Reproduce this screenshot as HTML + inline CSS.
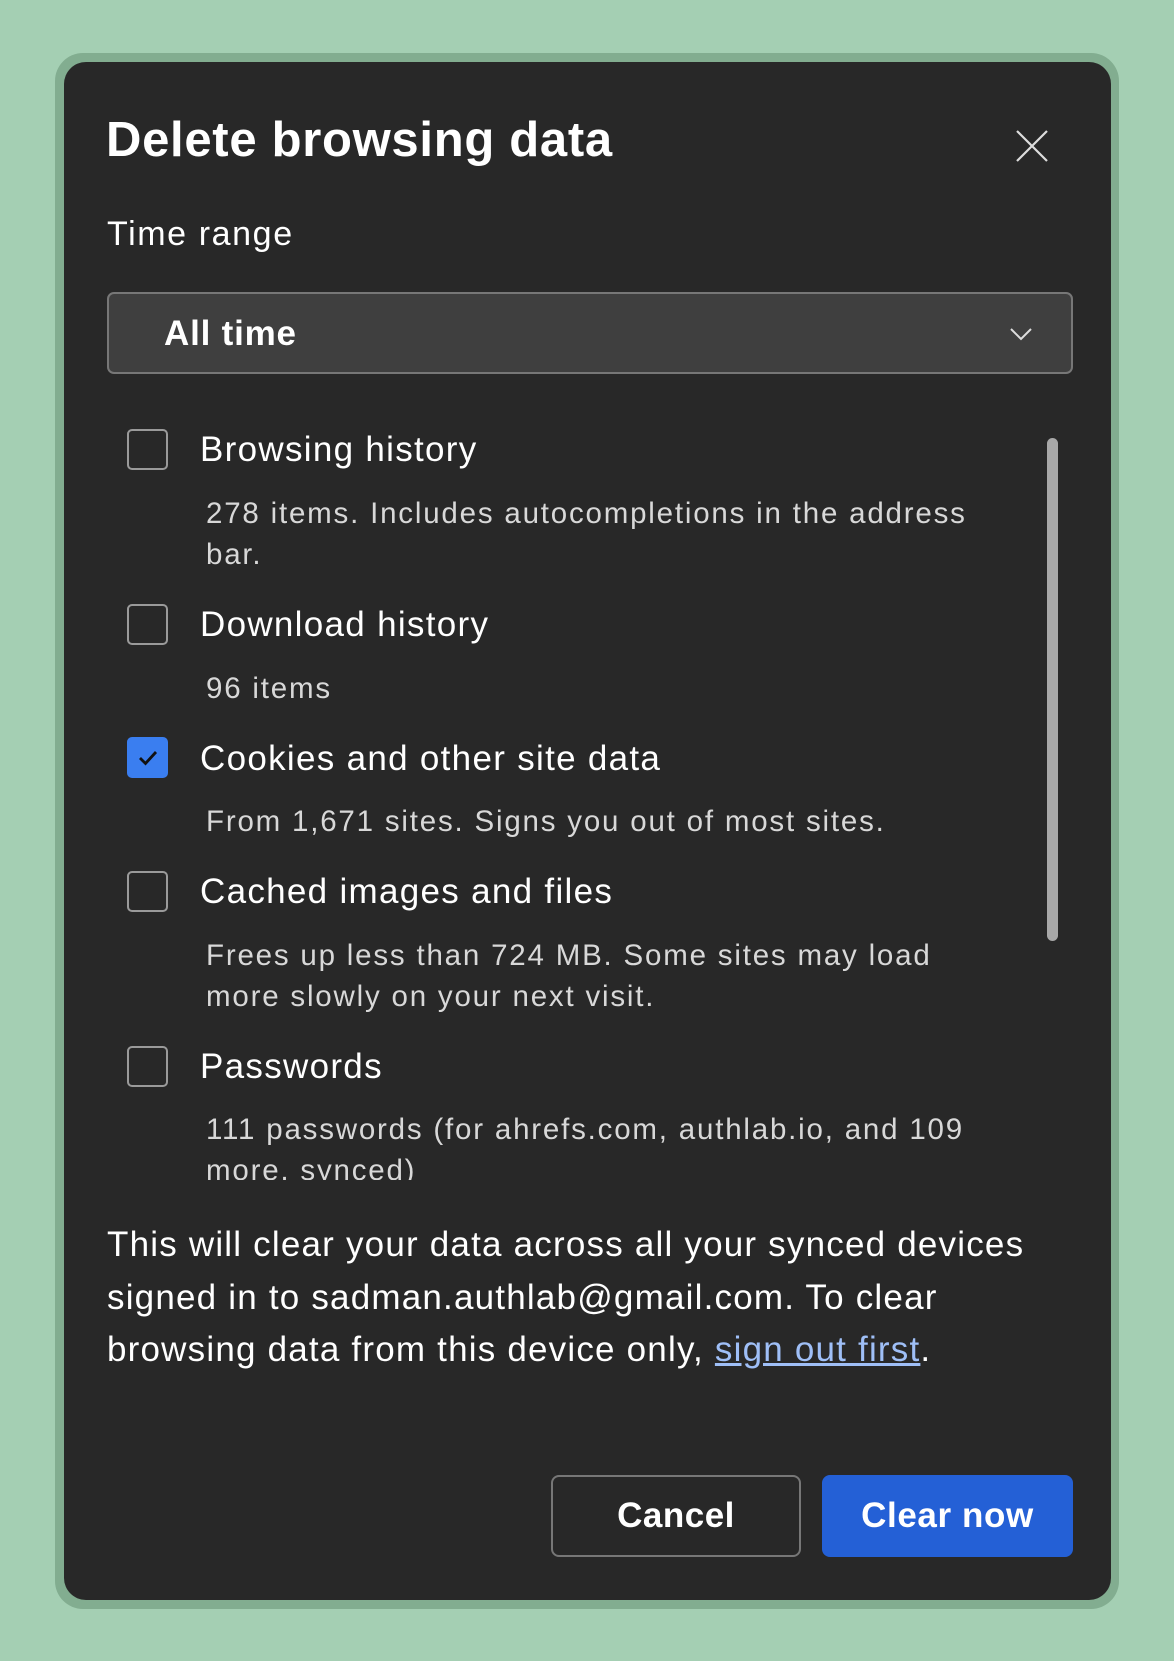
<!DOCTYPE html>
<html><head><meta charset="utf-8"><style>
*{margin:0;padding:0;box-sizing:border-box}
body{width:1174px;height:1661px;background:#a4cfb3;font-family:"Liberation Sans",Arial,sans-serif;position:relative;overflow:hidden;color:#fff}
.outer{position:absolute;left:55px;top:53px;width:1064px;height:1556px;border-radius:28px;background:#82ad90}
.dlg{position:absolute;left:64px;top:62px;width:1047px;height:1538px;border-radius:22px;background:#282828}
.a{position:absolute;white-space:nowrap}
.cb{position:absolute;left:127px;width:41px;height:41px;border:2px solid #9a9a9a;border-radius:5px}
.lbl{position:absolute;left:200px;font-size:35px;line-height:40px;letter-spacing:1.3px;white-space:nowrap}
.desc{position:absolute;left:206px;font-size:29.5px;line-height:41px;color:#d8d8d8;white-space:nowrap;letter-spacing:1.8px}
.btn{position:absolute;top:1475px;height:82px;border-radius:8px;font-weight:bold;font-size:35px;display:flex;align-items:center;justify-content:center}
</style></head><body>
<div class="outer"></div>
<div class="dlg"></div>
<div class="a" style="left:106px;top:112px;font-size:49px;font-weight:bold;letter-spacing:0.7px">Delete browsing data</div>
<svg class="a" style="left:1015px;top:129px" width="34" height="34" viewBox="0 0 34 34"><path d="M2 2L32 32M32 2L2 32" stroke="#ddd" stroke-width="2.2"/></svg>
<div class="a" style="left:107px;top:215px;font-size:34px;letter-spacing:1.6px">Time range</div>
<div class="a" style="left:107px;top:292px;width:966px;height:82px;background:#3f3f3f;border:2px solid #777;border-radius:7px"></div>
<div class="a" style="left:164px;top:314px;font-size:35px;font-weight:bold;letter-spacing:0.8px">All time</div>
<svg class="a" style="left:1010px;top:327px" width="22" height="14" viewBox="0 0 22 14"><path d="M1 2L11 12L21 2" stroke="#ddd" stroke-width="2" fill="none"/></svg>
<div class="a" style="left:1047px;top:438px;width:11px;height:503px;border-radius:6px;background:#a8a8a8"></div>

<div class="cb" style="top:429px"></div>
<div class="lbl" style="top:430px">Browsing history</div>
<div class="desc" style="top:493px">278 items. Includes autocompletions in the address<br>bar.</div>

<div class="cb" style="top:604px"></div>
<div class="lbl" style="top:605px">Download history</div>
<div class="desc" style="top:668px">96 items</div>

<div class="cb" style="top:737px;background:#3a7ef0;border-color:#3a7ef0"></div>
<svg class="a" style="left:137px;top:749px" width="22" height="18" viewBox="0 0 22 18"><path d="M3 9L8.5 14.5L19 3" stroke="#111" stroke-width="2.8" fill="none"/></svg>
<div class="lbl" style="top:739px">Cookies and other site data</div>
<div class="desc" style="top:801px">From 1,671 sites. Signs you out of most sites.</div>

<div class="cb" style="top:871px"></div>
<div class="lbl" style="top:872px">Cached images and files</div>
<div class="desc" style="top:935px">Frees up less than 724 MB. Some sites may load<br>more slowly on your next visit.</div>

<div class="cb" style="top:1046px"></div>
<div class="lbl" style="top:1047px">Passwords</div>
<div class="a" style="left:206px;top:1109px;height:71px;overflow:hidden"><div class="desc" style="position:static">111 passwords (for ahrefs.com, authlab.io, and 109<br>more, synced)</div></div>

<div class="a" style="left:107px;top:1219px;font-size:35px;line-height:52.5px;letter-spacing:1.2px">This will clear your data across all your synced devices<br>signed in to sadman.authlab@gmail.com. To clear<br>browsing data from this device only, <span style="color:#9fbff7;text-decoration:underline">sign out first</span>.</div>

<div class="btn" style="left:551px;width:250px;border:2px solid #777;letter-spacing:0.5px">Cancel</div>
<div class="btn" style="left:822px;width:251px;background:#2460d6;letter-spacing:0.6px">Clear now</div>
</body></html>
